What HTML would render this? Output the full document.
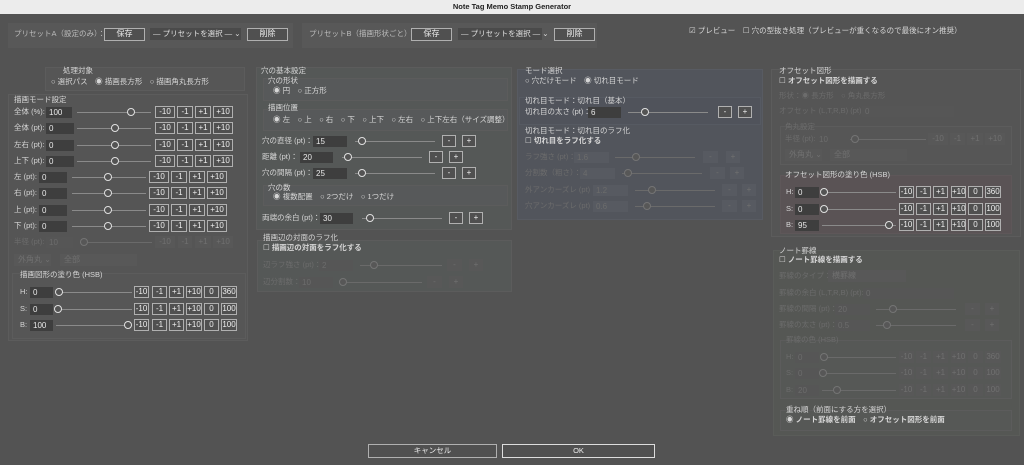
<!DOCTYPE html>
<html><head><meta charset="utf-8">
<style>
*{margin:0;padding:0;box-sizing:border-box}
body{width:1024px;height:465px;background:#535353;position:relative;overflow:hidden;font-family:"Liberation Sans","Noto Sans CJK JP",sans-serif;color:#dcdcdc}
div,span{position:absolute}
.tb{left:0;top:0;width:1024px;height:14px;background:#ececec;color:#222;font-size:7.5px;font-weight:bold;text-align:center;line-height:14px}
.t{white-space:nowrap;font-size:7.5px;line-height:10px;color:#d6d6d6}
.f{color:#6c6c6c}
.i{height:11px;background:#3e3e3e;color:#e8e8e8;font-size:8px;line-height:11px;padding-left:3px}
.fi{background:#565656;color:#6c6c6c}
.b{height:12px;border:1px solid #b0b0b0;background:#505050;color:#eee;font-size:8px;line-height:10px;text-align:center;white-space:nowrap}
.fb{height:12px;background:#585858;color:#707070;font-size:8px;line-height:12px;text-align:center}
.l{height:1px;background:#8a8a8a}
.fl{height:1px;background:#6a6a6a}
.k{width:8px;height:8px;border:1px solid #e0e0e0;border-radius:50%;background:#535353}
.fk{width:8px;height:8px;border:1px solid #747474;border-radius:50%;background:#575757}
.g{border:1px solid #5c5c5c;background:#565656}
.sel{height:12px;background:#4a4a4a;color:#e0e0e0;font-size:7.5px;line-height:12px;padding-left:3px;white-space:nowrap}
</style></head><body>
<div class="tb">Note Tag Memo Stamp Generator</div>

<!-- preset groups -->
<div class="g" style="left:8px;top:23px;width:285px;height:25px;background:#585858;border:none"></div>
<div class="t" style="left:14px;top:29px;color:#bbb">プリセットA（設定のみ）：</div>
<div class="b" style="left:104px;top:28px;width:41px;height:13px">保存</div>
<div class="sel" style="left:150px;top:28px;width:91px">— プリセットを選択 — ⌄</div>
<div class="b" style="left:247px;top:28px;width:41px;height:13px">削除</div>
<div class="g" style="left:302px;top:23px;width:295px;height:25px;background:#585858;border:none"></div>
<div class="t" style="left:309px;top:29px;color:#bbb">プリセットB（描画形状ごと）：</div>
<div class="b" style="left:411px;top:28px;width:41px;height:13px">保存</div>
<div class="sel" style="left:458px;top:28px;width:84px">— プリセットを選択 — ⌄</div>
<div class="b" style="left:554px;top:28px;width:41px;height:13px">削除</div>
<div class="t" style="left:689px;top:26px">☑ プレビュー　☐ 穴の型抜き処理（プレビューが重くなるので最後にオン推奨）</div>

<!-- LEFT PANEL -->
<div class="g" style="left:8px;top:94px;width:240px;height:247px;background:#555"></div>
<div class="g" style="left:45px;top:67px;width:200px;height:24px"></div>
<div class="t" style="left:63px;top:66px">処理対象</div>
<div class="t" style="left:51px;top:77px">○ 選択パス　<b>◉</b> 描画長方形　○ 描画角丸長方形</div>
<div class="t" style="left:14px;top:95px">描画モード設定</div>

<div class="t" style="left:14px;top:107px">全体 (%):</div><div class="i" style="left:46px;top:107px;width:26px">100</div>
<div class="l" style="left:77px;top:112px;width:74px"></div><div class="k" style="left:127px;top:108px"></div>
<div class="b" style="left:155px;top:106px;width:20px">-10</div><div class="b" style="left:177px;top:106px;width:16px">-1</div><div class="b" style="left:195px;top:106px;width:16px">+1</div><div class="b" style="left:213px;top:106px;width:20px">+10</div>

<div class="t" style="left:14px;top:123px">全体 (pt):</div><div class="i" style="left:46px;top:123px;width:28px">0</div>
<div class="l" style="left:77px;top:128px;width:74px"></div><div class="k" style="left:111px;top:124px"></div>
<div class="b" style="left:155px;top:122px;width:20px">-10</div><div class="b" style="left:177px;top:122px;width:16px">-1</div><div class="b" style="left:195px;top:122px;width:16px">+1</div><div class="b" style="left:213px;top:122px;width:20px">+10</div>

<div class="t" style="left:14px;top:140px">左右 (pt):</div><div class="i" style="left:46px;top:140px;width:28px">0</div>
<div class="l" style="left:77px;top:145px;width:74px"></div><div class="k" style="left:111px;top:141px"></div>
<div class="b" style="left:155px;top:139px;width:20px">-10</div><div class="b" style="left:177px;top:139px;width:16px">-1</div><div class="b" style="left:195px;top:139px;width:16px">+1</div><div class="b" style="left:213px;top:139px;width:20px">+10</div>

<div class="t" style="left:14px;top:156px">上下 (pt):</div><div class="i" style="left:46px;top:156px;width:28px">0</div>
<div class="l" style="left:77px;top:161px;width:74px"></div><div class="k" style="left:111px;top:157px"></div>
<div class="b" style="left:155px;top:155px;width:20px">-10</div><div class="b" style="left:177px;top:155px;width:16px">-1</div><div class="b" style="left:195px;top:155px;width:16px">+1</div><div class="b" style="left:213px;top:155px;width:20px">+10</div>

<div class="t" style="left:14px;top:172px">左 (pt):</div><div class="i" style="left:39px;top:172px;width:28px">0</div>
<div class="l" style="left:72px;top:177px;width:74px"></div><div class="k" style="left:104px;top:173px"></div>
<div class="b" style="left:149px;top:171px;width:20px">-10</div><div class="b" style="left:171px;top:171px;width:16px">-1</div><div class="b" style="left:189px;top:171px;width:16px">+1</div><div class="b" style="left:207px;top:171px;width:20px">+10</div>

<div class="t" style="left:14px;top:188px">右 (pt):</div><div class="i" style="left:39px;top:188px;width:28px">0</div>
<div class="l" style="left:72px;top:193px;width:74px"></div><div class="k" style="left:104px;top:189px"></div>
<div class="b" style="left:149px;top:187px;width:20px">-10</div><div class="b" style="left:171px;top:187px;width:16px">-1</div><div class="b" style="left:189px;top:187px;width:16px">+1</div><div class="b" style="left:207px;top:187px;width:20px">+10</div>

<div class="t" style="left:14px;top:205px">上 (pt):</div><div class="i" style="left:39px;top:205px;width:28px">0</div>
<div class="l" style="left:72px;top:210px;width:74px"></div><div class="k" style="left:104px;top:206px"></div>
<div class="b" style="left:149px;top:204px;width:20px">-10</div><div class="b" style="left:171px;top:204px;width:16px">-1</div><div class="b" style="left:189px;top:204px;width:16px">+1</div><div class="b" style="left:207px;top:204px;width:20px">+10</div>

<div class="t" style="left:14px;top:221px">下 (pt):</div><div class="i" style="left:39px;top:221px;width:28px">0</div>
<div class="l" style="left:72px;top:226px;width:74px"></div><div class="k" style="left:104px;top:222px"></div>
<div class="b" style="left:149px;top:220px;width:20px">-10</div><div class="b" style="left:171px;top:220px;width:16px">-1</div><div class="b" style="left:189px;top:220px;width:16px">+1</div><div class="b" style="left:207px;top:220px;width:20px">+10</div>

<div class="t f" style="left:14px;top:237px">半径 (pt):</div><div class="i fi" style="left:46px;top:237px;width:27px">10</div>
<div class="fl" style="left:80px;top:242px;width:72px"></div><div class="fk" style="left:80px;top:238px"></div>
<div class="fb" style="left:155px;top:236px;width:20px">-10</div><div class="fb" style="left:178px;top:236px;width:14px">-1</div><div class="fb" style="left:195px;top:236px;width:16px">+1</div><div class="fb" style="left:213px;top:236px;width:20px">+10</div>
<div class="fb" style="left:14px;top:254px;width:37px;text-align:left;padding-left:4px">外角丸 ⌄</div>
<div class="fb" style="left:60px;top:254px;width:77px;text-align:left;padding-left:4px">全部</div>

<div class="g" style="left:12px;top:273px;width:234px;height:66px"></div>
<div class="t" style="left:20px;top:270px">描画図形の塗り色 (HSB)</div>
<div class="t" style="left:20px;top:287px">H:</div><div class="i" style="left:30px;top:287px;width:23px">0</div>
<div class="l" style="left:56px;top:292px;width:76px"></div><div class="k" style="left:55px;top:288px"></div>
<div class="b" style="left:134px;top:286px;width:15px">-10</div><div class="b" style="left:152px;top:286px;width:15px">-1</div><div class="b" style="left:169px;top:286px;width:15px">+1</div><div class="b" style="left:186px;top:286px;width:16px">+10</div><div class="b" style="left:204px;top:286px;width:15px">0</div><div class="b" style="left:221px;top:286px;width:16px">360</div>
<div class="t" style="left:20px;top:304px">S:</div><div class="i" style="left:30px;top:304px;width:23px">0</div>
<div class="l" style="left:56px;top:309px;width:76px"></div><div class="k" style="left:54px;top:305px"></div>
<div class="b" style="left:134px;top:303px;width:15px">-10</div><div class="b" style="left:152px;top:303px;width:15px">-1</div><div class="b" style="left:169px;top:303px;width:15px">+1</div><div class="b" style="left:186px;top:303px;width:16px">+10</div><div class="b" style="left:204px;top:303px;width:15px">0</div><div class="b" style="left:221px;top:303px;width:16px">100</div>
<div class="t" style="left:20px;top:320px">B:</div><div class="i" style="left:30px;top:320px;width:23px">100</div>
<div class="l" style="left:56px;top:325px;width:76px"></div><div class="k" style="left:124px;top:321px"></div>
<div class="b" style="left:134px;top:319px;width:15px">-10</div><div class="b" style="left:152px;top:319px;width:15px">-1</div><div class="b" style="left:169px;top:319px;width:15px">+1</div><div class="b" style="left:186px;top:319px;width:16px">+10</div><div class="b" style="left:204px;top:319px;width:15px">0</div><div class="b" style="left:221px;top:319px;width:16px">100</div>

<!-- MIDDLE PANEL -->
<div class="g" style="left:256px;top:67px;width:256px;height:163px;background:#555857"></div>
<div class="t" style="left:261px;top:66px">穴の基本設定</div>
<div class="g" style="left:263px;top:78px;width:245px;height:23px;background:#57595a"></div>
<div class="t" style="left:268px;top:76px">穴の形状</div>
<div class="t" style="left:273px;top:86px"><b>◉</b> 円　○ 正方形</div>
<div class="g" style="left:263px;top:109px;width:245px;height:22px;background:#57595a"></div>
<div class="t" style="left:268px;top:103px">描画位置</div>
<div class="t" style="left:273px;top:115px"><b>◉</b> 左　○ 上　○ 右　○ 下　○ 上下　○ 左右　○ 上下左右（サイズ調整）</div>

<div class="t" style="left:262px;top:136px">穴の直径 (pt)：</div><div class="i" style="left:313px;top:136px;width:34px">15</div>
<div class="l" style="left:355px;top:141px;width:80px"></div><div class="k" style="left:358px;top:137px"></div>
<div class="b" style="left:442px;top:135px;width:14px">-</div><div class="b" style="left:462px;top:135px;width:14px">+</div>
<div class="t" style="left:262px;top:152px">距離 (pt)：</div><div class="i" style="left:300px;top:152px;width:33px">20</div>
<div class="l" style="left:342px;top:157px;width:80px"></div><div class="k" style="left:344px;top:153px"></div>
<div class="b" style="left:429px;top:151px;width:14px">-</div><div class="b" style="left:449px;top:151px;width:14px">+</div>
<div class="t" style="left:262px;top:168px">穴の間隔 (pt)：</div><div class="i" style="left:313px;top:168px;width:34px">25</div>
<div class="l" style="left:355px;top:173px;width:80px"></div><div class="k" style="left:358px;top:169px"></div>
<div class="b" style="left:442px;top:167px;width:14px">-</div><div class="b" style="left:462px;top:167px;width:14px">+</div>
<div class="g" style="left:263px;top:185px;width:245px;height:21px;background:#57595a"></div>
<div class="t" style="left:268px;top:183px">穴の数</div>
<div class="t" style="left:273px;top:192px"><b>◉</b> 複数配置　○ 2つだけ　○ 1つだけ</div>
<div class="t" style="left:262px;top:213px">両端の余白 (pt)：</div><div class="i" style="left:320px;top:213px;width:33px">30</div>
<div class="l" style="left:362px;top:218px;width:80px"></div><div class="k" style="left:366px;top:214px"></div>
<div class="b" style="left:449px;top:212px;width:14px">-</div><div class="b" style="left:469px;top:212px;width:14px">+</div>

<div class="g" style="left:257px;top:240px;width:255px;height:52px;background:#555857"></div>
<div class="t" style="left:263px;top:233px">描画辺の対面のラフ化</div>
<div class="t" style="left:263px;top:243px">☐ <b>描画辺の対面をラフ化する</b></div>
<div class="t f" style="left:263px;top:260px">辺ラフ強さ (pt)：</div><div class="i fi" style="left:319px;top:260px;width:34px">2</div>
<div class="fl" style="left:360px;top:265px;width:82px"></div><div class="fk" style="left:370px;top:261px"></div>
<div class="fb" style="left:447px;top:259px;width:15px">-</div><div class="fb" style="left:469px;top:259px;width:14px">+</div>
<div class="t f" style="left:263px;top:277px">辺分割数：</div><div class="i fi" style="left:299px;top:277px;width:34px">10</div>
<div class="fl" style="left:340px;top:282px;width:82px"></div><div class="fk" style="left:339px;top:278px"></div>
<div class="fb" style="left:427px;top:276px;width:15px">-</div><div class="fb" style="left:449px;top:276px;width:14px">+</div>

<!-- MODE PANEL -->
<div class="g" style="left:517px;top:69px;width:246px;height:151px;background:#52555c;border-color:#585b62"></div>
<div class="t" style="left:525px;top:66px">モード選択</div>
<div class="t" style="left:525px;top:76px">○ 穴だけモード　<b>◉</b> 切れ目モード</div>
<div class="g" style="left:519px;top:97px;width:242px;height:28px;background:#50535b;border-color:#565a62"></div>
<div class="t" style="left:525px;top:96px">切れ目モード：切れ目（基本）</div>
<div class="t" style="left:525px;top:107px">切れ目の太さ (pt)：</div><div class="i" style="left:588px;top:107px;width:33px">6</div>
<div class="l" style="left:628px;top:112px;width:80px"></div><div class="k" style="left:641px;top:108px"></div>
<div class="b" style="left:718px;top:106px;width:14px">-</div><div class="b" style="left:738px;top:106px;width:14px">+</div>
<div class="t" style="left:525px;top:126px">切れ目モード：切れ目のラフ化</div>
<div class="t" style="left:525px;top:136px">☐ <b>切れ目をラフ化する</b></div>
<div class="t f" style="left:525px;top:152px">ラフ強さ (pt)：</div><div class="i fi" style="left:574px;top:152px;width:35px;background:#575a61">1.6</div>
<div class="fl" style="left:615px;top:157px;width:80px"></div><div class="fk" style="left:632px;top:153px"></div>
<div class="fb" style="left:703px;top:151px;width:15px;background:#575a61">-</div><div class="fb" style="left:726px;top:151px;width:14px;background:#575a61">+</div>
<div class="t f" style="left:525px;top:168px">分割数（粗さ）：</div><div class="i fi" style="left:580px;top:168px;width:35px;background:#575a61">4</div>
<div class="fl" style="left:622px;top:173px;width:80px"></div><div class="fk" style="left:624px;top:169px"></div>
<div class="fb" style="left:710px;top:167px;width:15px;background:#575a61">-</div><div class="fb" style="left:730px;top:167px;width:14px;background:#575a61">+</div>
<div class="t f" style="left:525px;top:185px">外アンカーズレ (pt)：</div><div class="i fi" style="left:593px;top:185px;width:35px;background:#575a61">1.2</div>
<div class="fl" style="left:635px;top:190px;width:80px"></div><div class="fk" style="left:648px;top:186px"></div>
<div class="fb" style="left:722px;top:184px;width:15px;background:#575a61">-</div><div class="fb" style="left:742px;top:184px;width:14px;background:#575a61">+</div>
<div class="t f" style="left:525px;top:201px">穴アンカーズレ (pt)：</div><div class="i fi" style="left:593px;top:201px;width:35px;background:#575a61">0.6</div>
<div class="fl" style="left:635px;top:206px;width:80px"></div><div class="fk" style="left:643px;top:202px"></div>
<div class="fb" style="left:722px;top:200px;width:15px;background:#575a61">-</div><div class="fb" style="left:742px;top:200px;width:14px;background:#575a61">+</div>

<!-- RIGHT PANEL -->
<div class="g" style="left:771px;top:69px;width:250px;height:168px;background:#555"></div>
<div class="t" style="left:779px;top:66px">オフセット図形</div>
<div class="t" style="left:779px;top:76px">☐ <b>オフセット図形を描画する</b></div>
<div class="t f" style="left:779px;top:91px">形状：◉ 長方形　○ 角丸長方形</div>
<div class="t f" style="left:779px;top:106px">オフセット (L,T,R,B) (pt):</div><div class="i fi" style="left:862px;top:106px;width:92px">0</div>
<div class="g" style="left:780px;top:126px;width:232px;height:39px;background:#565656"></div>
<div class="t f" style="left:785px;top:122px">角丸設定</div>
<div class="t f" style="left:785px;top:134px">半径 (pt):</div><div class="i fi" style="left:816px;top:134px;width:27px">10</div>
<div class="fl" style="left:850px;top:139px;width:76px"></div><div class="fk" style="left:851px;top:135px"></div>
<div class="fb" style="left:928px;top:133px;width:20px">-10</div><div class="fb" style="left:950px;top:133px;width:15px">-1</div><div class="fb" style="left:967px;top:133px;width:16px">+1</div><div class="fb" style="left:985px;top:133px;width:20px">+10</div>
<div class="fb" style="left:785px;top:149px;width:37px;text-align:left;padding-left:4px">外角丸 ⌄</div>
<div class="fb" style="left:830px;top:149px;width:77px;text-align:left;padding-left:4px">全部</div>
<div class="g" style="left:780px;top:175px;width:232px;height:59px;background:#5a5355;border-color:#5e5759"></div>
<div class="t" style="left:785px;top:170px">オフセット図形の塗り色 (HSB)</div>
<div class="t" style="left:786px;top:187px">H:</div><div class="i" style="left:795px;top:187px;width:24px">0</div>
<div class="l" style="left:822px;top:192px;width:74px"></div><div class="k" style="left:820px;top:188px"></div>
<div class="b" style="left:899px;top:186px;width:15px">-10</div><div class="b" style="left:916px;top:186px;width:15px">-1</div><div class="b" style="left:933px;top:186px;width:15px">+1</div><div class="b" style="left:951px;top:186px;width:15px">+10</div><div class="b" style="left:968px;top:186px;width:15px">0</div><div class="b" style="left:985px;top:186px;width:16px">360</div>
<div class="t" style="left:786px;top:204px">S:</div><div class="i" style="left:795px;top:204px;width:24px">0</div>
<div class="l" style="left:822px;top:209px;width:74px"></div><div class="k" style="left:820px;top:205px"></div>
<div class="b" style="left:899px;top:203px;width:15px">-10</div><div class="b" style="left:916px;top:203px;width:15px">-1</div><div class="b" style="left:933px;top:203px;width:15px">+1</div><div class="b" style="left:951px;top:203px;width:15px">+10</div><div class="b" style="left:968px;top:203px;width:15px">0</div><div class="b" style="left:985px;top:203px;width:16px">100</div>
<div class="t" style="left:786px;top:220px">B:</div><div class="i" style="left:795px;top:220px;width:24px">95</div>
<div class="l" style="left:822px;top:225px;width:74px"></div><div class="k" style="left:885px;top:221px"></div>
<div class="b" style="left:899px;top:219px;width:15px">-10</div><div class="b" style="left:916px;top:219px;width:15px">-1</div><div class="b" style="left:933px;top:219px;width:15px">+1</div><div class="b" style="left:951px;top:219px;width:15px">+10</div><div class="b" style="left:968px;top:219px;width:15px">0</div><div class="b" style="left:985px;top:219px;width:16px">100</div>

<div class="g" style="left:773px;top:250px;width:247px;height:186px;background:#555754;border-color:#5a5c59"></div>
<div class="t" style="left:779px;top:246px">ノート罫線</div>
<div class="t" style="left:779px;top:255px">☐ <b>ノート罫線を描画する</b></div>
<div class="t f" style="left:779px;top:271px">罫線のタイプ：</div><div class="fb" style="left:828px;top:270px;width:78px;text-align:left;padding-left:4px">横罫線</div>
<div class="t f" style="left:779px;top:288px">罫線の余白 (L,T,R,B) (pt):</div><div class="i fi" style="left:863px;top:288px;width:91px">0</div>
<div class="t f" style="left:779px;top:304px">罫線の間隔 (pt)：</div><div class="i fi" style="left:835px;top:304px;width:35px">20</div>
<div class="fl" style="left:876px;top:309px;width:80px"></div><div class="fk" style="left:889px;top:305px"></div>
<div class="fb" style="left:965px;top:303px;width:15px">-</div><div class="fb" style="left:985px;top:303px;width:14px">+</div>
<div class="t f" style="left:779px;top:320px">罫線の太さ (pt)：</div><div class="i fi" style="left:835px;top:320px;width:35px">0.5</div>
<div class="fl" style="left:876px;top:325px;width:80px"></div><div class="fk" style="left:883px;top:321px"></div>
<div class="fb" style="left:965px;top:319px;width:15px">-</div><div class="fb" style="left:985px;top:319px;width:14px">+</div>
<div class="g" style="left:780px;top:340px;width:232px;height:59px;background:#565856"></div>
<div class="t f" style="left:786px;top:335px">罫線の色 (HSB)</div>
<div class="t f" style="left:786px;top:352px">H:</div><div class="i fi" style="left:795px;top:352px;width:24px">0</div>
<div class="fl" style="left:822px;top:357px;width:74px"></div><div class="fk" style="left:820px;top:353px"></div>
<div class="fb" style="left:899px;top:351px;width:15px">-10</div><div class="fb" style="left:916px;top:351px;width:15px">-1</div><div class="fb" style="left:933px;top:351px;width:15px">+1</div><div class="fb" style="left:951px;top:351px;width:15px">+10</div><div class="fb" style="left:968px;top:351px;width:15px">0</div><div class="fb" style="left:985px;top:351px;width:16px">360</div>
<div class="t f" style="left:786px;top:368px">S:</div><div class="i fi" style="left:795px;top:368px;width:24px">0</div>
<div class="fl" style="left:822px;top:373px;width:74px"></div><div class="fk" style="left:819px;top:369px"></div>
<div class="fb" style="left:899px;top:367px;width:15px">-10</div><div class="fb" style="left:916px;top:367px;width:15px">-1</div><div class="fb" style="left:933px;top:367px;width:15px">+1</div><div class="fb" style="left:951px;top:367px;width:15px">+10</div><div class="fb" style="left:968px;top:367px;width:15px">0</div><div class="fb" style="left:985px;top:367px;width:16px">100</div>
<div class="t f" style="left:786px;top:385px">B:</div><div class="i fi" style="left:795px;top:385px;width:24px">20</div>
<div class="fl" style="left:822px;top:390px;width:74px"></div><div class="fk" style="left:833px;top:386px"></div>
<div class="fb" style="left:899px;top:384px;width:15px">-10</div><div class="fb" style="left:916px;top:384px;width:15px">-1</div><div class="fb" style="left:933px;top:384px;width:15px">+1</div><div class="fb" style="left:951px;top:384px;width:15px">+10</div><div class="fb" style="left:968px;top:384px;width:15px">0</div><div class="fb" style="left:985px;top:384px;width:16px">100</div>
<div class="g" style="left:780px;top:410px;width:232px;height:21px;background:#565856"></div>
<div class="t" style="left:786px;top:405px">重ね順（前面にする方を選択）</div>
<div class="t" style="left:786px;top:415px"><b>◉ ノート罫線を前面</b>　○ <b>オフセット図形を前面</b></div>

<!-- bottom buttons -->
<div class="b" style="left:368px;top:444px;width:129px;height:14px;line-height:12px;font-size:7.5px">キャンセル</div>
<div class="b" style="left:502px;top:444px;width:153px;height:14px;line-height:12px;font-size:7.5px;border-color:#ddd">OK</div>
</body></html>
